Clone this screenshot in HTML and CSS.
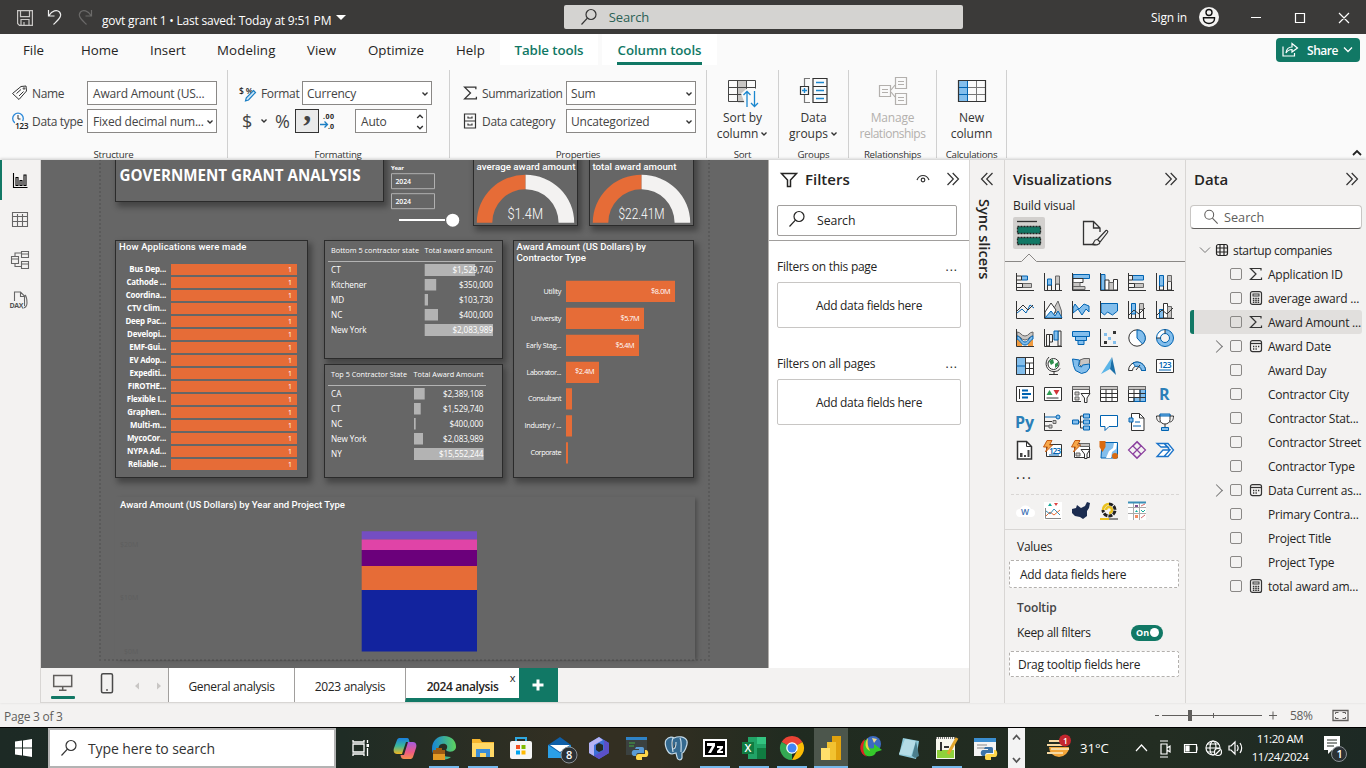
FILE: index.html
```html
<!DOCTYPE html>
<html lang="en">
<head>
<meta charset="utf-8">
<title>govt grant 1</title>
<link rel="stylesheet" href="styles.css">
</head>
<body>
<svg class="defs" width="0" height="0">
  <symbol id="sigma" viewBox="0 0 14 14"><path d="M12 3.500V1.500H1.500L7 7L1.500 12.500H12.500V10.500" fill="none" stroke="#333" stroke-width="1.200"/></symbol>
  <symbol id="calc" viewBox="0 0 14 14"><rect x="1.500" y=".6" width="11" height="12.800" rx="2" fill="none" stroke="#333" stroke-width="1.200"/><rect x="4" y="3" width="6" height="2" fill="none" stroke="#333"/><path d="M3.800 7.500h6.500M3.800 9.500h6.500M3.800 11.300h6.500" stroke="#333" stroke-width="1.300" stroke-dasharray="1.600 .8"/></symbol>
  <symbol id="cal" viewBox="0 0 14 14"><rect x="1.500" y="1.600" width="11" height="11" rx="2" fill="none" stroke="#333" stroke-width="1.200"/><path d="M1.500 4.500h11" stroke="#333" stroke-width="1.200"/><path d="M4 7.500h6.500M4 10h4.500" stroke="#333" stroke-width="1.300" stroke-dasharray="1.300 1.200"/></symbol>
  <symbol id="down" viewBox="0 0 8 8"><path d="M1.500 2.500L4 5L6.500 2.500" fill="none" stroke="#333" stroke-width="1.400"/></symbol>
  <symbol id="dbl" viewBox="0 0 14 14"><path d="M1.500 1L7.300 7L1.500 13M6.700 1L12.500 7L6.700 13" fill="none" stroke="#333" stroke-width="1.200"/></symbol>
  <symbol id="lens" viewBox="0 0 18 18"><circle cx="11" cy="6.500" r="5" fill="none" stroke="currentColor" stroke-width="1.200"/><path d="M7.400 10.200L1.500 16.500" stroke="currentColor" stroke-width="1.200"/></symbol>
</svg>

<header class="titlebar">
  <svg class="tb-icons" width="96" height="34" fill="none" stroke="#c8c6c4" stroke-width="1.200"><path d="M17.600 10.600h14.800v14.800H19.500l-1.900-1.900zM20.500 10.600v6h9v-6M21 25v-5.500h8V25M24 25v-3"/><path d="M48.500 10v6h6M49 15.500c3-5 8-6 10.500-3.500c3.500 4-1.500 8-6 12.500" stroke="#eee"/><path d="M91.500 10v6h-6M91 15.500c-3-5-8-6-10.500-3.500c-3.500 4 1.500 8 6 12.500" stroke="#6b6a69"/></svg>
  <span class="doc">govt grant 1&nbsp;•&nbsp;Last saved: Today at 9:51 PM</span><i class="tri"></i>
  <div class="topsearch"><svg width="18" height="18"><use href="#lens"/></svg><span>Search</span></div>
  <span class="signin">Sign in</span>
  <svg class="winbtns" width="168" height="34" fill="none" stroke="#fff" stroke-width="1.200"><circle cx="11" cy="17" r="10" fill="#f3f2f1" stroke="none"/><circle cx="11" cy="12.500" r="3" stroke="#111" stroke-width="1.400"/><path d="M5.500 17.800h11v1.200a5.500 4.500 0 0 1-11 0z" stroke="#111" stroke-width="1.400"/><path d="M53 17.500h10M97.500 13.500h9v9h-9zM141 13l10 10M151 13l-10 10"/></svg>
</header>

<nav class="tabs">
  <span class="t-file">File</span><span class="t-home">Home</span><span class="t-ins">Insert</span><span class="t-mod">Modeling</span><span class="t-view">View</span><span class="t-opt">Optimize</span><span class="t-help">Help</span>
  <b class="ctx table">Table tools</b><b class="ctx column"><u>Column tools</u></b>
  <div class="share"><svg width="17" height="16" fill="none" stroke="#fff" stroke-width="1.200"><path d="M1 4.500v9.500h11.500v-3M4 11c.5-4.500 3-6 6-6V1.500L15.500 6L10 10V7.500C7.500 7.500 5.500 8.500 4 11z"/></svg><span>Share</span><svg width="10" height="8" fill="none" stroke="#fff" stroke-width="1.300"><path d="M1 1.500l4 4l4-4"/></svg></div>
</nav>

<section class="ribbon">
  <div class="grp g1">
    <div class="row"><svg width="18" height="18" fill="none" stroke="#333" stroke-width="1"><path d="M.5 9.500L9 2.500l5-.5l.5 5L7 15.500zM4.500 9.500l4.500-4M7 12l4.500-4.500"/><circle cx="12" cy="4.500" r=".8"/></svg><span>Name</span><div class="box">Award Amount (US...</div></div>
    <div class="row"><svg width="18" height="18" fill="none"><circle cx="6" cy="6.500" r="5.300" stroke="#2b88d8" stroke-width="1.300"/><path d="M6 3V7H8.500" stroke="#333"/><path d="M3 9h14v8H3z" fill="#fafafa"/><text x="3" y="16.500" class="i9" fill="#222" textLength="13.500">123</text></svg><span>Data type</span><div class="box">Fixed decimal num...<svg width="8" height="8"><use href="#down"/></svg></div></div>
    <p>Structure</p>
  </div>
  <div class="grp g2">
    <div class="row"><svg width="18" height="18"><text x="0" y="9.500" class="i9" fill="#222" textLength="14">$%</text><path d="M14.500 6.500l2 2l-7 7.500l-3 .800l.8-3z" fill="#cfe6f7" stroke="#1b7fc4" stroke-width="1.200"/></svg><span>Format</span><div class="box">Currency<svg width="8" height="8"><use href="#down"/></svg></div></div>
    <div class="row fmt"><span class="dollar">$</span><svg width="8" height="8"><use href="#down"/></svg><span class="pct">%</span><span class="comma">,</span><svg class="dec" width="17" height="20"><text x="3" y="8" class="i8" fill="#222" textLength="11">.00</text><text x="8" y="18" class="i8" fill="#222">.0</text><path d="M0 13.500h7M4.500 10.500l3 3l-3 3" fill="none" stroke="#1b7fc4" stroke-width="1.300"/></svg><div class="box auto">Auto<svg width="8" height="18" fill="none" stroke="#333" stroke-width="1.400"><path d="M1.200 5L4 2.200L6.800 5M1.200 13L4 15.800L6.800 13"/></svg></div></div>
    <p>Formatting</p>
  </div>
  <div class="grp g3">
    <div class="row"><svg width="15" height="16"><use href="#sigma"/></svg><span>Summarization</span><div class="box">Sum<svg width="8" height="8"><use href="#down"/></svg></div></div>
    <div class="row"><svg width="15" height="16" fill="none" stroke="#333" stroke-width="1.200"><path d="M1.500 1h11v14h-11zM1.500 8h11M5 3.500v1.500h4V3.500M5 10.500V12h4v-1.500"/></svg><span>Data category</span><div class="box">Uncategorized<svg width="8" height="8"><use href="#down"/></svg></div></div>
    <p>Properties</p>
  </div>
  <div class="grp big g4"><svg width="32" height="32" fill="none"><path d="M11 5.500h9v22h-9z" fill="#c8c6c4"/><path d="M1.500 5.500h27v21h-27zM1.500 12.500h27M1.500 19.500h27M10.500 5.500v21M19.500 5.500v21" stroke="#444"/><path d="M14 18.500l6-5h11v18H19z" fill="#fafafa"/><path d="M20 32V16.500M16.500 20l3.500-3.500l3.500 3.500M27.500 16v15.500M24 28l3.500 3.500L31 28" stroke="#1b87cf" stroke-width="1.300"/></svg><span>Sort by<br>column<svg width="8" height="8"><use href="#down"/></svg></span><p>Sort</p></div>
  <div class="grp big g5"><svg width="32" height="32" fill="none" stroke="#333" stroke-width="1.200"><path d="M15 3.500h14v24H15zM15 11.500h14M15 19.500h14"/><path d="M12 3.500H6.500V11M12 27.500H6.500V20" stroke="#777"/><path d="M2.500 11.500h8v8h-8z"/><path d="M18 7.500h8M18 15.500h8M18 23.500h8M6.500 13v5M4 15.500h5" stroke="#1b87cf" stroke-width="1.400"/></svg><span>Data<br>groups<svg width="8" height="8"><use href="#down"/></svg></span><p>Groups</p></div>
  <div class="grp big g6"><svg width="32" height="32" fill="none" stroke="#b3b0ad" stroke-width="1.200"><path d="M2.500 10.500h11v11h-11zM18.500 2.500h11v11h-11zM18.500 18.500h11v11h-11zM14 15l4-5M14 17l4 5M5 14.500h6M5 17.500h6M21 6.500h6M21 9.500h6M21 22.500h6M21 25.500h6"/></svg><span>Manage<br>relationships</span><p>Relationships</p></div>
  <div class="grp big g7"><svg width="32" height="32" fill="none"><path d="M2.500 5.500h9v21h-9z" fill="#83beec"/><path d="M2.500 12.500h27M2.500 19.500h27M20.500 5.500v21" stroke="#777"/><path d="M2 12.500h9.500M2 19.500h9.500M11.500 5.500v21" stroke="#0063b1"/><path d="M2.500 5.500h27v21h-27z" stroke="#333" stroke-width="1.200"/></svg><span>New<br>column</span><p>Calculations</p></div>
  <svg class="collapse" width="10" height="8" fill="none" stroke="#222" stroke-width="1.800"><path d="M1 6l4-4l4 4"/></svg>
</section>

<main class="work">
  <aside class="rail">
    <i></i>
    <svg width="41" height="160" fill="none" stroke="#666" stroke-width="1.100"><path d="M14.500 13v14.500h14M17 25.500v-8h2v8zM21 25.500v-5h2v5zM25 25.500V15h2v10.500z" stroke="#000"/><path d="M13.500 52.500h15v14h-15zM13.500 56.500h15M13.500 61.500h15M18.500 54v12M23.500 54v12"/><path d="M12.500 96.500h7v7h-7zM22.500 91.500h7v6h-7zM22.500 101.500h7v7h-7zM16 96v-3h6M16 104v2.500h6M12.500 99h7M22.500 94h7M22.500 104h7"/><path d="M15.500 141v-9h6l4 4v10M21.500 132v4.500h4M26 135c2 2 2 5 2 8s-2 5-5 5"/><path d="M10 141h15v7H10z" fill="#f3f2f1" stroke="none"/><text x="10.500" y="147.500" class="i8" fill="#555" stroke="none" textLength="14">DAX</text></svg>
  </aside>

  <section class="center">
    <div class="upper">
      <div class="canvas">
        <div class="page"></div>
        <svg class="v v-title" viewBox="115 150 269 52"><text x="119.500" y="180.500" class="hd" textLength="241" lengthAdjust="spacingAndGlyphs">GOVERNMENT GRANT ANALYSIS</text></svg>
        <svg class="v-year" viewBox="385 160 80 72"><text x="391" y="169.500" class="s6" font-weight="700" textLength="13">Year</text><path d="M391.500 173.700h43v15h-43zM391.500 193.700h43v15h-43z" fill="none" stroke="#b0b0b0"/><text x="395.500" y="184" class="s" font-weight="600" textLength="15.500">2024</text><text x="395.500" y="204" class="s" font-weight="600" textLength="15.500">2024</text><path d="M399 220h46" stroke="#fff" stroke-width="2"/><circle cx="452.700" cy="220.200" r="6.500" fill="#fff"/></svg>
        <svg class="v v-g1" viewBox="473 150 105 76"><text x="476.500" y="170" class="din" textLength="99" lengthAdjust="spacingAndGlyphs">average award amount</text><path d="M476.800 222.700A48.700 48 0 0 1 525.600 174.700V189.300A33 33.400 0 0 0 492.300 222.700z" fill="#e66c37"/><path d="M525.600 174.700A48.700 48 0 0 1 574.200 222.700H558.600A33 33.400 0 0 0 525.600 189.300z" fill="#f3f2f1"/><text x="507.500" y="219" class="num" textLength="35.500" lengthAdjust="spacingAndGlyphs">$1.4M</text></svg>
        <svg class="v v-g2" viewBox="589 150 105 76"><text x="592.500" y="170" class="din" textLength="84" lengthAdjust="spacingAndGlyphs">total award amount</text><path d="M592.800 222.700A48.700 48 0 0 1 641.600 174.700V189.300A33 33.400 0 0 0 608.300 222.700z" fill="#e66c37"/><path d="M641.600 174.700A48.700 48 0 0 1 690.200 222.700H674.600A33 33.400 0 0 0 641.600 189.300z" fill="#f3f2f1"/><text x="618.500" y="218.500" class="num" textLength="46" lengthAdjust="spacingAndGlyphs">$22.41M</text></svg>
        <div class="v v-app">
          <h3>How Applications were made</h3>
          <ul>
            <li><b>Bus Dep...</b><i>1</i></li><li><b>Cathode ...</b><i>1</i></li><li><b>Coordina...</b><i>1</i></li><li><b>CTV Clim...</b><i>1</i></li><li><b>Deep Pac...</b><i>1</i></li><li><b>Developi...</b><i>1</i></li><li><b>EMF-Gui...</b><i>1</i></li><li><b>EV Adop...</b><i>1</i></li><li><b>Expediti...</b><i>1</i></li><li><b>FIROTHE...</b><i>1</i></li><li><b>Flexible I...</b><i>1</i></li><li><b>Graphen...</b><i>1</i></li><li><b>Multi-m...</b><i>1</i></li><li><b>MycoCor...</b><i>1</i></li><li><b>NYPA Ad...</b><i>1</i></li><li><b>Reliable ...</b><i>1</i></li>
          </ul>
        </div>
        <svg class="v v-b5" viewBox="324 240 179 119"><g class="tab"><text x="331" y="253.300" class="s8" textLength="88" lengthAdjust="spacingAndGlyphs">Bottom 5 contractor state</text><text x="424.500" y="253.300" class="s8" textLength="68" lengthAdjust="spacingAndGlyphs">Total award amount</text><path d="M328 261.500h168" stroke="#b3b3b3"/><path d="M424.700 264h50.500v12h-50.500zM424.700 279h11.500v11.500h-11.500zM424.700 294h3.300v11.500h-3.300zM424.700 309h13.300v11.500h-13.300zM424.700 324h68.300v12h-68.300z" fill="#b3b3b3"/>
          <text x="331" y="273.300">CT</text><text x="331" y="288.300" textLength="35.500">Kitchener</text><text x="331" y="303.300">MD</text><text x="331" y="318.300">NC</text><text x="331" y="333.300" textLength="35.500">New York</text>
          <g text-anchor="end"><text x="493" y="273.300" textLength="40.500">$1,529,740</text><text x="493" y="288.300" textLength="34">$350,000</text><text x="493" y="303.300" textLength="34">$103,730</text><text x="493" y="318.300" textLength="34">$400,000</text><text x="493" y="333.300" textLength="40.500">$2,083,989</text></g></g></svg>
        <svg class="v v-t5" viewBox="324 364 179 114"><g class="tab"><text x="331" y="377.300" class="s8" textLength="76" lengthAdjust="spacingAndGlyphs">Top 5 Contractor State</text><text x="413.500" y="377.300" class="s8" textLength="70" lengthAdjust="spacingAndGlyphs">Total Award Amount</text><path d="M328 385.500h158" stroke="#b3b3b3"/><path d="M414 388h10.700v11.500H414zM414 403h6.700v11.500H414zM414 418h1.700v11.500H414zM414 433h9v11.500h-9zM414 448h69.700v12H414z" fill="#b3b3b3"/>
          <text x="331" y="397.300">CA</text><text x="331" y="412.300">CT</text><text x="331" y="427.300">NC</text><text x="331" y="442.300" textLength="35.500">New York</text><text x="331" y="457.300">NY</text>
          <g text-anchor="end"><text x="483.500" y="397.300" textLength="40.500">$2,389,108</text><text x="483.500" y="412.300" textLength="40.500">$1,529,740</text><text x="483.500" y="427.300" textLength="34">$400,000</text><text x="483.500" y="442.300" textLength="40.500">$2,083,989</text><text x="483.500" y="457.300" textLength="44.500">$15,552,244</text></g></g></svg>
        <svg class="v v-type" viewBox="513 240 181 238"><text x="516.500" y="250" class="din" textLength="129.500" lengthAdjust="spacingAndGlyphs">Award Amount (US Dollars) by</text><text x="516.500" y="261" class="din" textLength="69.500" lengthAdjust="spacingAndGlyphs">Contractor Type</text>
          <path d="M566 280.700h109v21.300H566zM566 307.700h78v21.300h-78zM566 334.700h73v21.300h-73zM566 361.700h33v21.300h-33zM566 388.300h6v21.300h-6zM566 415.200h6v21.300h-6zM566 442.200h2v21.300h-2z" fill="#e66c37"/>
          <g class="cat" text-anchor="end"><text x="561.500" y="294" textLength="18">Utility</text><text x="561.500" y="321" textLength="30.500">University</text><text x="561.500" y="348" textLength="35.500">Early Stag...</text><text x="561.500" y="375" textLength="35">Laborator...</text><text x="561.500" y="401" textLength="33.500">Consultant</text><text x="561.500" y="428" textLength="37">Industry / ...</text><text x="561.500" y="455" textLength="31">Corporate</text><text x="670.500" y="294" textLength="19.500">$8.0M</text><text x="639.500" y="321" textLength="19">$5.7M</text><text x="634.500" y="348" textLength="19">$5.4M</text><text x="594.500" y="374" textLength="19.500">$2.4M</text></g></svg>
        <svg class="v-year2" viewBox="115 497 580 163"><text x="120" y="508.300" class="din" textLength="225" lengthAdjust="spacingAndGlyphs">Award Amount (US Dollars) by Year and Project Type</text><g class="faint"><text x="120" y="547">$20M</text><text x="120" y="600">$10M</text><text x="124" y="654">$0M</text></g><path d="M361.700 531.300H477v8.200H361.700z" fill="#744ec2"/><path d="M361.700 539.500H477v10.500H361.700z" fill="#e044a7"/><path d="M361.700 550H477v16H361.700z" fill="#6b007b"/><path d="M361.700 566H477v24H361.700z" fill="#e66c37"/><path d="M361.700 590H477v61.500H361.700z" fill="#12239e"/></svg>
      </div>

      <aside class="filters">
        <div class="fhead"><svg width="18" height="18" fill="none" stroke="#252423" stroke-width="1.500"><path d="M1.500 1.500h15L10.500 8v6.500h-3V8z"/></svg><h2>Filters</h2><svg class="eye" width="14" height="10" fill="none" stroke="#333" stroke-width="1.200"><path d="M1 6c2.500-6 9.500-6 12 0"/><circle cx="7" cy="6" r="1.800"/></svg><svg width="14" height="14"><use href="#dbl"/></svg></div>
        <div class="fsearch"><svg width="18" height="18"><use href="#lens"/></svg><span>Search</span></div>
        <div class="fsec"><div><span>Filters on this page</span><em>...</em></div><p>Add data fields here</p></div>
        <div class="fsec"><div><span>Filters on all pages</span><em>...</em></div><p>Add data fields here</p></div>
      </aside>
    </div>
    <div class="pages">
      <div class="device"><svg width="128" height="35" fill="none" stroke="#605e5c" stroke-width="1.500"><path d="M12.700 7.500h18v11h-18zM21.700 19v3M18 22.200h7.500"/><rect x="60.500" y="5.700" width="11" height="19" rx="1.500" stroke="#4a4a4a"/><path d="M65 22h2"/><path d="M98 14.500v7l-4-3.500zM116 14.500v7l4-3.500z" fill="#c8c6c4" stroke="none"/><rect x="10" y="28" width="24" height="3" rx="1" fill="#117865" stroke="none"/></svg></div>
      <span class="pt p1">General analysis</span><span class="pt p2">2023 analysis</span><span class="pt p3 on">2024 analysis<small>x</small></span>
      <div class="add"><svg width="12" height="12"><path d="M6 .5v11M.5 6h11" stroke="#fff" stroke-width="3"/></svg></div>
    </div>
  </section>

  <aside class="sync"><svg width="14" height="14" class="flip"><use href="#dbl"/></svg><span>Sync slicers</span></aside>

  <aside class="viz">
    <div class="vhead"><h2>Visualizations</h2><svg width="14" height="14"><use href="#dbl"/></svg></div>
    <div class="bv">Build visual</div>
    <svg class="vtabs" width="180" height="49" fill="none"><rect x="8" y="1" width="32" height="32" rx="2" fill="#d2d0ce"/><path d="M12 5.500h20" stroke="#333" stroke-width="1.300"/><path d="M12.500 10.500h23v7h-23zM12.500 21.500h23v7h-23z" fill="#117865" stroke="#222" stroke-width="1.300" stroke-dasharray="2 1"/><path d="M90.500 28.500H78.500v-23h10l6.500 6.500v4M88.500 5.500v6.500h6" stroke="#333" stroke-width="1.300"/><path d="M100.500 15l-8 8.500l2.500 2.500l7.500-9.500c1-1.500-1-3-2-1.500zM92 23.500c-4 0-2 3.500-5 5c4 1 8 0 8-2.500" stroke="#333" stroke-width="1.200"/><path d="M0 45.500h16.500l7.500-7.500l7.500 7.500H180" stroke="#8a8886"/></svg>
    <div class="icons">
      <svg><path class="k" d="M.5 0v17.500H18"/><path class="g" d="M6.500 10.500h9v4h-9z"/><path class="b" d="M5.500 3h6v4h-6z"/><path class="k" d="M1 3h4.500v4H1M1 10.500h5.500v4H1"/></svg>
      <svg><path class="k" d="M.5 0v17.500H18M3.500 17v-5h4v5M11.500 17v-6h4v6"/><path class="b" d="M3.500 6h4v6h-4z"/><path class="g" d="M11.500 3h4v8h-4z"/></svg>
      <svg><path class="b" d="M1 1.500h16.500v4H1z"/><path class="w" d="M1 5.500h10v4H1z"/><path class="g" d="M1 9.500h7v4H1zM1 13.500h12v3H1z"/><path class="k" d="M.5 0v17.500H18"/></svg>
      <svg><path class="b" d="M1 1.500h4V17H1z"/><path class="w" d="M5 7h4v10H5zM13.500 6.500h4V17h-4z"/><path class="g" d="M9 9.500h4.500V17H9z"/><path class="k" d="M.5 0v17.500H18"/></svg>
      <svg><path class="b" d="M4.500 2.500h11v4.500h-11z"/><path class="g" d="M6.500 10.500h9v4h-9z"/><path class="k" d="M.5 0v17.500H18M1 2.500h3.500V7H1M1 10.500h5.500v4H1"/></svg>
      <svg><path class="b" d="M3.500 2.500h4V13h-4z"/><path class="g" d="M11.500 2.500h4v6h-4z"/><path class="k" d="M.5 0v17.500H18M3.500 13v4h4v-4M11.500 8.500V17h4V8.500"/></svg>

      <svg><path class="l" d="M1 12l5-4l4 4l4-8l4 3"/><path class="k" d="M.5 0v17.500H18M1 10l6-6l5 5l5-5"/></svg>
      <svg><path class="g" d="M9 9l5-9l3.500 10v7z"/><path class="w" d="M1 11l6-9l5 7l-4 8H1z"/><path class="b" d="M1 17l6-7l4 5l3-5l4 7z"/><path class="k" d="M.5 0v17.500H18"/></svg>
      <svg><path class="b" d="M1 7l2-4l4 5l5-5l5 2v6l-3-3l-4 6l-4-6l-5 4z"/><path class="k" d="M.5 0v17.500H18"/></svg>
      <svg><path class="b" d="M1 2.500h16.500V10l-5 4l-5-3l-3 3l-3.500-3z"/><path class="k" d="M.5 0v17.500H18"/></svg>
      <svg><path class="b" d="M3.500 2.500h4V13h-4z"/><path class="g" d="M11.500 2.500h4v6h-4z"/><path class="k" d="M.5 0v17.500H18M3.500 13v4M7.500 13v4M11.500 8v9M15.500 8v9M1 14l5-5l5 4l6-6"/></svg>
      <svg><path class="b" d="M3.500 8.500h4V17h-4z"/><path class="w" d="M7.500 2.500h4V17h-4z"/><path class="g" d="M11.500 5.500h4V17h-4z"/><path class="k" d="M.5 0v17.500H18M1 14l5-5l5 4l6-6"/></svg>

      <svg><path class="g" d="M1 3c4 0 4 4 8 4s4-4 8-4v4c-4 0-4 4-8 4s-4-4-8-4z"/><path d="M1 11h5v6H1zM12 11h5v6h-5z" fill="#f09a3e"/><path class="b" d="M1 7c4 0 4 6 8 6s4-6 8-6v3c-4 2-4 6-8 6s-4-4-8-6z"/><path class="k" d="M.5 0v17.500H18"/></svg>
      <svg><path class="k" d="M.5 0v17.500H18M2.500 5.500h3V17h-3zM5.500 5.500h3V13h-3zM14 2h3v15h-3z"/><path class="b" d="M10 2h4v9h-4z"/></svg>
      <svg><path class="b" d="M.5 2.500h17v5H.500zM3.500 7.500h11v4h-11zM6 11.500h6v4H6z"/></svg>
      <svg><path class="k" d="M.5 0v17.500H18"/><path d="M4 4h3v3H4zM8 8h3v3H8zM13 12h3v3h-3z" fill="#83beec"/><path d="M13 2h3v3h-3zM4 12h3v3H4z" fill="#333"/></svg>
      <svg><circle class="w" cx="9" cy="9" r="8.200"/><path class="b" d="M9 1a8 8 0 0 1 5.500 14L9 9z"/></svg>
      <svg><circle cx="9" cy="9" r="6.500" fill="none" stroke="#83beec" stroke-width="4"/><path d="M2.500 9A6.500 6.500 0 0 1 9 2.500" fill="none" stroke="#fff" stroke-width="4"/><circle class="l" cx="9" cy="9" r="8.500"/><circle class="l" cx="9" cy="9" r="4.500"/><path class="k" d="M9 .5v4M.5 9h4"/></svg>

      <svg><path class="b" d="M.5.5h9v17h-9z"/><path class="w" d="M9.500.5h8v17h-8z"/><path class="k" d="M9.500 6h8M9.500 11.500h8M13.500 6v11M.5.5h17v17H.500z"/><path class="l" d="M.5 9h9"/></svg>
      <svg><circle cx="9.500" cy="7" r="5.500" fill="#fff" stroke="#333"/><path d="M5 4l4-2l1 4l-3 2zM11 7l3-2v4l-3 2z" fill="#2f8f4e"/><path class="k" d="M5 0c-6 6-2 15 5 14.500c3 0 5-1 6-3M10 14.500v3M5 17.500h9"/></svg>
      <svg><path class="g" d="M8 3l4-1.500h5.500v5l-2 3l-5 1l-3-3z"/><path class="b" d="M.5 2l7 1l-1 6l3 1l1-2l7-1v4l-3 4l-5 1.500l-6-3l-2-5z"/></svg>
      <svg><path d="M12 0L1 17l9-5z" fill="#5bb5e8"/><path d="M12 0l4 18l-6-6z" fill="#1a6fa8"/></svg>
      <svg><path class="w" d="M.5 13.500a8.500 8.500 0 0 1 17 0h-4a4.500 4.500 0 0 0-9 0z"/><path class="b" d="M5 6a8.500 8.500 0 0 1 12.500 7.500h-4a4.500 4.500 0 0 0-6-4z"/><path class="k" d="M8 13l4-5"/></svg>
      <svg><path class="w" d="M.5 2.500h17v13H.500z"/><text x="2.500" y="11" class="i9" fill="#0063b1" textLength="13">123</text><path class="l" d="M3 13h12"/></svg>

      <svg><path class="w" d="M.5 1.500h17v15H.500z"/><path class="k" d="M3.500 4v10"/><path class="l" d="M6 5.500h6M6 9h9M6 12.500h6" stroke-width="1.800"/></svg>
      <svg><path class="w" d="M.5 2.500h17v13H.500z"/><path d="M2.500 10l3-5l3 5z" fill="#2f9e53"/><path d="M9.500 5h6l-3 5z" fill="#d13438"/><path class="k" d="M2.500 13h12"/></svg>
      <svg><path class="w" d="M.5 1.500h17v15H.500z"/><path class="g" d="M.5 1.500h17v3H.500zM3 7h4v3H3zM3 12h4v3H3z"/><path d="M9 9h9v9H9z" fill="#f3f2f1"/><path class="w" d="M9 8.500h9L15 13v4.500h-2.500V13z"/></svg>
      <svg><path class="w" d="M.5 1.500h17v15H.500z"/><path class="g" d="M.5 1.500h17v3H.500z"/><path class="k" d="M.5 8.500h17M.5 12.500h17M6 4.500v12M12 4.500v12"/></svg>
      <svg><path class="w" d="M.5 1.500h17v15H.500z"/><path class="b" d="M12 4.500h5.500v12H6v-4h6z"/><path class="g" d="M.5 1.500h17v3H.500z"/><path class="k" d="M.5 8.500h17M.5 12.500h17M6 4.500v12M12 4.500v12"/></svg>
      <svg><text x="3" y="15" class="ry">R</text></svg>

      <svg><text x="-1" y="15" class="ry" textLength="19">Py</text></svg>
      <svg><path class="k" d="M.5 0v17.500H18M1 8.500h7M1 13h4"/><path class="l" d="M1 4h11"/><circle class="b" cx="14" cy="4" r="2"/><path class="g" d="M9 7.500h3v3H9zM5 12h3v3H5z"/></svg>
      <svg><path class="k" d="M6 9h6M8.500 3v12M8.500 3H12M8.500 15H12"/><path class="b" d="M.5 7h6v4h-6zM11.500 1h6v4h-6zM11.500 7h6v4h-6zM11.500 13h6v4h-6z"/></svg>
      <svg><path class="w note" d="M.5 2.500h17v11H9l-4 4v-4H.500z"/></svg>
      <svg><path class="w" d="M3.500.5h8l4.500 4.500v12.500H3.500z"/><path class="k" d="M11.500.5V5H16"/><path class="b" d="M1 5h4v4H1z"/><path class="l" d="M7 9h5M5 13h8"/></svg>
      <svg><path class="w" d="M4 1.500h10v5c0 6-10 6-10 0z"/><path class="k" d="M4 3H.500c0 4 1.500 6 4 6M14 3h3.500c0 4-1.500 6-4 6"/><path class="b" d="M4 1h10v2H4zM5.500 14.500h7v3h-7z"/><path class="k" d="M9 11v3"/></svg>

      <svg><path class="w" d="M1.500.5h9l5 5v12.500H1.500z" stroke-width="1.500"/><path class="k" d="M10.500.5v5h5"/><path d="M4 12h2.500v4H4zM8 14h2v2H8zM11.500 9h2v7h-2z" fill="#444"/></svg>
      <svg><path class="w" d="M2.500 3.500h15v12h-15z"/><text x="5" y="12.500" class="i9" fill="#0063b1" textLength="12">123</text><path class="l" d="M5 14h10"/><path d="M3-.5h5L5.500 4h3l-7 7l2-5H-.5z" fill="#f7a84a" stroke="#c55a11"/></svg>
      <svg><path class="w" d="M2.500 2.500h15v14h-15z"/><path class="g" d="M8 2.500h9.500v3H8zM4 12h4v3H4z"/><path class="w" d="M9 8.500h9L15 13v4.500h-2.500V13z"/><path d="M3-.5h5L5.500 4h3l-7 7l2-5H-.5z" fill="#f7a84a" stroke="#c55a11"/></svg>
      <svg><path class="b" d="M2 1.500h15.500V17H1z"/><path d="M6 17l3-7l4-3l1-5h3l-1 6l-4 3l-1 6z" fill="#fff"/><path d="M-.5 0h6v6l-3 5l-3-5z" fill="#d8690f"/><circle cx="15" cy="15" r="3" fill="#d8690f"/></svg>
      <svg fill="none" stroke="#8b3f9e" stroke-width="1.200"><path d="M9 .5L17.500 9L9 17.500L.5 9zM9 1L5 5l4 4l4-4zM9 9l4 4l-4 4l-4-4zM5 5l4 4l-4 4M13 5L9 9l4 4"/></svg>
      <svg fill="#fff" stroke="#1a73c9" stroke-width="1.300"><path d="M1 2.500h7l4 3.500h-7zM1 15.500h7l6-6.500H7zM8 2.500h4l5.500 6.500l-5.500 6.500H8l6-6.500z"/></svg>
    </div>
    <div class="dots">...</div>
    <div class="custom">
      <svg><path d="M4 15a4 4 0 0 1 0-8a6 6 0 0 1 11 0a4 4 0 0 1 0 8z" fill="#fff"/><text x="5" y="13" class="i9" fill="#3d6fb4">W</text></svg>
      <svg><path d="M0 0h18v18H0z" fill="#fff"/><path d="M1.500 6v10.500H17" fill="none" stroke="#888"/><path d="M2 14l4-4l4 3l6-5" fill="none" stroke="#e66c37"/><path d="M2 9l4 3l4-5l6 6" fill="none" stroke="#3a8fb7"/><path d="M4 4l2-3l2 3z" fill="#1a9"/><path d="M10 1h4l-2 3z" fill="#d44"/></svg>
      <svg><path d="M0 7l4-1l1-3l4 3l4-2l2-4l3 1l-1 5l-2 3l0 5l-4 3l-3-2l-5-1l-3-3z" fill="#1b2c50"/></svg>
      <svg><path d="M9 2a6 6 0 1 1-6 6" fill="none" stroke="#222" stroke-width="3" stroke-dasharray="4 1"/><path d="M3 8a6 6 0 0 1 6-6M6 8a3 3 0 1 1 3 3" fill="none" stroke="#eac21f" stroke-width="2.500"/><path d="M0 17h9" stroke="#eac21f" stroke-width="2"/><path d="M9 17h9" stroke="#222"/></svg>
      <svg><path d="M0 0h18v18H0z" fill="#fff"/><path d="M0 5.500h18M0 11.500h18M5.500 0v18M11.500 0v18" stroke="#aaa"/><path d="M0 .5h18" stroke="#3a8fb7" stroke-width="2"/><path d="M7 3h3v2H7z" fill="#805090"/><path d="M13 4l4-2M13 16l4-3" stroke="#d46a6a"/><path d="M7 10l1.500-2L10 10z" fill="#1a9"/><path d="M13 8l2 2l2-2" fill="none" stroke="#1a9"/><path d="M7 13h3v3H7z" fill="#f58b60"/></svg>
    </div>
    <div class="wells"><h4>Values</h4><p>Add data fields here</p><h4 class="tt">Tooltip</h4><div class="keep"><span>Keep all filters</span><b>On<i></i></b></div><p class="drag">Drag tooltip fields here</p></div>
  </aside>

  <aside class="data">
    <div class="vhead"><h2>Data</h2><svg width="14" height="14"><use href="#dbl"/></svg></div>
    <div class="dsearch"><svg width="16" height="16" class="flip"><use href="#lens"/></svg><span>Search</span></div>
    <div class="tree">
      <div class="root"><svg width="12" height="8" fill="none" stroke="#777"><path d="M1 1.500l5 5l5-5"/></svg><svg width="14" height="14" fill="none" stroke="#252423" stroke-width="1.200"><rect x="1.500" y="1.500" width="11" height="11" rx="2"/><path d="M1.500 5h11M1.500 9h11M5 1.500v11M9 1.500v11"/></svg><span>startup companies</span></div>
      <div class="f"><em></em><i></i><svg><use href="#sigma"/></svg><span>Application ID</span></div>
      <div class="f"><em></em><i></i><svg><use href="#calc"/></svg><span>average award ...</span></div>
      <div class="f sel"><em></em><i></i><svg><use href="#sigma"/></svg><span>Award Amount ...</span></div>
      <div class="f"><em class="ar"></em><i></i><svg><use href="#cal"/></svg><span>Award Date</span></div>
      <div class="f"><em></em><i></i><svg></svg><span>Award Day</span></div>
      <div class="f"><em></em><i></i><svg></svg><span>Contractor City</span></div>
      <div class="f"><em></em><i></i><svg></svg><span>Contractor Stat...</span></div>
      <div class="f"><em></em><i></i><svg></svg><span>Contractor Street</span></div>
      <div class="f"><em></em><i></i><svg></svg><span>Contractor Type</span></div>
      <div class="f"><em class="ar"></em><i></i><svg><use href="#cal"/></svg><span>Data Current as...</span></div>
      <div class="f"><em></em><i></i><svg></svg><span>Primary Contra...</span></div>
      <div class="f"><em></em><i></i><svg></svg><span>Project Title</span></div>
      <div class="f"><em></em><i></i><svg></svg><span>Project Type</span></div>
      <div class="f"><em></em><i></i><svg><use href="#calc"/></svg><span>total award am...</span></div>
    </div>
  </aside>
</main>

<footer class="status"><span>Page 3 of 3</span><svg width="216" height="24" fill="none" stroke="#605e5c"><path d="M5 12.500h4M12 12.500h100M119 12.500h8M123 8.500v8M63.500 10v5"/><path d="M40 7v11" stroke-width="4"/><text x="140" y="17" class="zm" textLength="23">58%</text><path d="M183 7.500h15v10h-15z" stroke-width="1.300"/><path d="M185.500 11v-1.500h3M192.500 9.500h3V11M195.500 14v1.500h-3M188.500 15.500h-3V14"/></svg></footer>

<footer class="taskbar">
  <div class="start"><svg width="18" height="18" fill="#fff"><path d="M0 2.500l7-1v7H0zM8 1.400L17 0v8.500H8zM0 9.500h7v7l-7-1zM8 9.500h9V18l-9-1.400z"/></svg></div>
  <div class="tsearch"><svg width="18" height="18"><use href="#lens"/></svg><span>Type here to search</span></div>
  <div class="apps">
    <div class="a tv"><svg viewBox="0 0 24 24" fill="none" stroke="#fff" stroke-width="1.300"><path d="M4 8h11v8H4zM4 4v2h11V4M4 20v-2h11v2M18.500 4v3M18.500 12v8"/><path d="M17.500 8h2.500v3h-2.500z" fill="#fff" stroke="none"/></svg></div>
    <div class="a"><svg viewBox="0 0 24 24"><defs><linearGradient id="c1" x1="0" y1="0" x2="0" y2="1"><stop offset="0" stop-color="#1a7fe0"/><stop offset=".5" stop-color="#3bb89a"/><stop offset="1" stop-color="#f4b51e"/></linearGradient><linearGradient id="c2" x1="0" y1="0" x2="0" y2="1"><stop offset="0" stop-color="#a35be0"/><stop offset=".6" stop-color="#ee5a84"/><stop offset="1" stop-color="#f7904b"/></linearGradient></defs><path d="M7 2h7c2 0 2 2 2.500 4H13L9 18H4c-3 0-4-3-3-6l3-8c.7-1.500 1.500-2 3-2z" fill="url(#c1)"/><path d="M17 23h-6c-2 0-3-1-3.500-4H11l4-13h5c3 0 4 3 3 6l-3 9c-.7 1.500-1.500 2-3 2z" fill="url(#c2)"/></svg></div>
    <div class="a u"><svg viewBox="0 0 24 24"><defs><linearGradient id="ed"><stop offset="0" stop-color="#1684d8"/><stop offset="1" stop-color="#5ed35c"/></linearGradient></defs><path d="M0 13C0 4 6 0 12 0c8 0 12 5 12 11c0 5-8 6-10 3c3-4 0-7-4-6c-6 1-5 13 9 13c-8 6-19 1-19-8z" fill="url(#ed)"/><path d="M1 14h12v10H1z" fill="#e39a24"/><path d="M1 14h12v4H1zM4 12h6v2H4z" fill="#9b5b13"/></svg></div>
    <div class="a u"><svg viewBox="0 0 24 24"><path d="M1 3h8l2 3h12v15H1z" fill="#f5b52e"/><path d="M1 7h22v14H1z" fill="#ffd866"/><path d="M5 13h14v8h-4v-4H9v4H5z" fill="#3b8ed8"/></svg></div>
    <div class="a"><svg viewBox="0 0 24 24"><path d="M7 6V2h10v4" fill="none" stroke="#2fa8e0" stroke-width="2"/><rect x="1" y="5" width="22" height="18" rx="2" fill="#f5f5f5"/><path d="M7 9h4v4H7z" fill="#f25022"/><path d="M12.500 9h4v4h-4z" fill="#7fba00"/><path d="M7 14.500h4v4H7z" fill="#00a4ef"/><path d="M12.500 14.500h4v4h-4z" fill="#ffb900"/></svg></div>
    <div class="a"><svg viewBox="0 0 24 24"><path d="M0 9L12 1l11 8v13H0z" fill="#0f5fa8"/><path d="M2 9h20L12 16z" fill="#fff"/><path d="M0 9l12 8l11-8v13H0z" fill="#2b9fe6"/><circle cx="21" cy="19" r="8" fill="#2b3135" stroke="#8b9196"/><text x="18" y="23" class="i10" fill="#fff" font-weight="700">8</text></svg></div>
    <div class="a"><svg viewBox="0 0 24 24"><path d="M12 1l10 6v10l-10 6l-10-6V7z" fill="#3c6fd8"/><path d="M12 1L2 7v10l5 3V9l9-5z" fill="#b5b3f5"/><path d="M22 7v10l-10 6l-5-3l10-6V4z" fill="#5b50c8"/><path d="M9 9l3-2l4 2v5l-4 2l-3-2z" fill="#252b25"/></svg></div>
    <div class="a"><svg viewBox="0 0 24 24"><path d="M1 1h21v18H1z" fill="#3b4140"/><path d="M1 1h21v3H1z" fill="#2f83c7"/><path d="M4 7h6M4 10h5" stroke="#4a4"/><path d="M11 11h6c2 0 2 1 2 3v3h-6c-1 0-2 1-2 3H9c-3 0-3-6 0-6h5v-1h-4z" fill="#5b9bd5"/><path d="M20 14h1c3 0 3 7 0 7h-4v3h-4c-2 0-2-1-2-3c0-2 1-3 3-3h6z" fill="#ffd74a"/></svg></div>
    <div class="a"><svg viewBox="0 0 24 24" fill="#34698f" stroke="#c5dae8" stroke-width="1.200"><path d="M2 4c3-4 7-3 8-2c4-2 11-2 13 3c1 4-3 12-5 12v5c-1 3-5 2-5-1l-1-4l-4 1C3 18 0 8 2 4zM9 2c-2 4-1 8 0 14M16 2c2 4 1 10 1 14M9 13c2 0 3-2 3-7"/></svg></div>
    <div class="a u"><svg viewBox="0 0 24 24"><path d="M0 3h24v18H0z" fill="#fff"/><path d="M2 5h20v14H2z" fill="#000"/><path d="M4 7h8v3l-4 7H5l4-7H4zM14 10h6v2l-3 3h3v2h-6v-2l3-3h-3z" fill="#fff"/></svg></div>
    <div class="a u"><svg viewBox="0 0 24 24"><path d="M6 1h18v22H6z" fill="#21a366"/><path d="M15 1h9v7h-9z" fill="#33c481"/><path d="M15 12h9v11h-9z" fill="#107c41"/><path d="M0 6h12v12H0z" fill="#107c41"/><text x="2.500" y="16" class="i10" fill="#fff">X</text></svg></div>
    <div class="a u"><svg viewBox="0 0 24 24"><path d="M12 12L1.600 6A12 12 0 0 1 22.400 6z" fill="#ea4335"/><path d="M12 12V24A12 12 0 0 1 1.600 6z" fill="#34a853"/><path d="M12 12L22.400 6A12 12 0 0 1 12 24l5-9z" fill="#fbbc05"/><circle cx="12" cy="12" r="5.800" fill="#fff"/><circle cx="12" cy="12" r="4.500" fill="#4285f4"/></svg></div>
    <div class="a u act"><svg viewBox="0 0 24 24"><path d="M13 0h9v24h-9z" fill="#e0a10e"/><path d="M8 6h9v18H8z" fill="#f2c230"/><path d="M2 12h9v12H2z" fill="#ffdf6b"/></svg></div>
    <div class="a"><svg viewBox="0 0 24 24"><circle cx="15" cy="8" r="8" fill="#3c6ac0"/><path d="M9 3c-8 4-8 14 0 17c4 1 8 0 9-4l6-2l-8-6v4c-5 2-9-3-7-9z" fill="#35c92b"/><path d="M7 3c-7 5-6 15 2 18c-4-4-5-10-2-18z" fill="#d22"/><path d="M10 2c-4 5-3 11 2 13c-2-4-3-8-2-13z" fill="#f0d040"/><path d="M14 2l5 1l-3 4z" fill="#e8d890"/></svg></div>
    <div class="a"><svg viewBox="0 0 24 24"><path d="M7 2l16 3l-3 18l-17-4z" fill="#8cc8d8"/><path d="M9 3l11 2l-5 15l-12-2z" fill="#b5dce6"/><path d="M20 5l3 15l-4 2l-3-2z" fill="#4b7e8c"/></svg></div>
    <div class="a u"><svg viewBox="0 0 24 24"><path d="M1 1h19v22H1z" fill="#f7f7ee"/><path d="M2 14h17v8H2z" fill="#8fd13c"/><path d="M1 2h19" stroke="#777" stroke-dasharray="1 1" stroke-width="2"/><path d="M6 6v9M9 11h5" stroke="#333" stroke-width="2"/><path d="M22 2l-9 16" stroke="#e2a72e" stroke-width="3"/></svg></div>
    <div class="a"><svg viewBox="0 0 24 24"><path d="M0 2h22v18H0z" fill="#f4f4f4"/><path d="M0 2h22v4H0z" fill="#3b8ed0"/><path d="M3 9h10M3 12h8" stroke="#888"/><path d="M11 11h6c2 0 2 1 2 3v3h-6c-1 0-2 1-2 3H9c-3 0-3-6 0-6h5v-1h-4z" fill="#3b73a8"/><path d="M20 14h1c3 0 3 7 0 7h-4v3h-4c-2 0-2-1-2-3c0-2 1-3 3-3h6z" fill="#ffd74a"/></svg></div>
  </div>
  <div class="scr"><svg width="17" height="40" fill="none" stroke="#555" stroke-width="1.800"><path d="M5 11.500l3.500-4l3.500 4M5 30l3.500 4l3.500-4"/></svg></div>
  <svg class="weather" width="28" height="28" viewBox="0 0 28 28"><path d="M3 13h20a10 10 0 0 1-20 0z" fill="#f2a63b"/><path d="M3 7h12M1 11h18M5 15h18M1 19h16" stroke="#f7d9a1" stroke-width="2"/><circle cx="19" cy="6.500" r="6" fill="#c4262e"/><text x="17" y="10" class="i9" fill="#fff">1</text></svg>
  <span class="temp">31°C</span>
  <svg class="tray" width="110" height="30" fill="none" stroke="#fff" stroke-width="1.200"><path d="M1 18l5.500-6l5.500 6M26 11h6v10h-6zM32 15l3-2v6l-3-2M25 8h8M25 24h8M49.500 11.500h12v8h-12zM62 13.500v4"/><path d="M51 13h3v5h-3z" fill="#fff"/><circle cx="78" cy="15" r="7"/><ellipse cx="78" cy="15" rx="3" ry="7"/><path d="M71 15h14M72 11h12M72 19h7"/><circle cx="83" cy="19" r="3.500" fill="#222b20"/><path d="M81 21l4-4M94 13h2l4-4v12l-4-4h-2zM102 12c1.500 2 1.500 4 0 6M105 10c2 3 2 7 0 10"/></svg>
  <div class="clock">11:20 AM<br>11/24/2024</div>
  <svg class="notif" width="30" height="32"><path d="M1 4h16v14h-8l-4 4v-4H1z" fill="#fff"/><path d="M4 8h10M4 11h10M4 14h7" stroke="#222b24"/><circle cx="16" cy="22" r="7.500" fill="#2b3135" stroke="#8b9196"/><text x="13.500" y="26" class="i10" fill="#fff">1</text></svg>
</footer>
</body>
</html>
```
FILE: styles.css
```css
* { box-sizing: border-box; }
body { margin: 0; width: 1366px; height: 768px; overflow: hidden; display: flex; flex-direction: column; font-family: "Open Sans", "Noto Sans", sans-serif; font-size: 12px; color: #252423; background: #f3f2f1; }
h2, h3, h4, p, ul { margin: 0; padding: 0; font-weight: 400; }
i, em, u { font-style: normal; text-decoration: none; }
svg { flex: none; overflow: visible; }
span { white-space: nowrap; }
.defs { position: absolute; }
.flip { transform: scaleX(-1); }
.i8 { font-size: 7px; font-weight: 700; }
.i9 { font-size: 8.5px; font-weight: 600; }
.i10 { font-size: 11px; font-weight: 600; }

.titlebar { height: 34px; flex: none; background: #3b3a39; color: #fff; display: flex; align-items: center; }
.doc { margin-left: 6px; padding-top: 6px; font-size: 12px; letter-spacing: -.21px; width: 231px; }
.tri { margin-left: 3px; border: 5px solid transparent; border-top-color: #fff; border-bottom: 0; }
.topsearch { margin-left: 218px; width: 400px; height: 24px; border-radius: 2px; background: #d4d3d1; color: #333; display: flex; align-items: center; padding-left: 16px; gap: 11px; font-size: 13px; letter-spacing: -.1px; }
.topsearch span { color: #2b6155; }
.signin { margin-left: 188px; width: 47px; padding-top: 1px; font-size: 12px; letter-spacing: -.15px; }

.tabs { height: 31px; flex: none; background: #fafafa; display: flex; align-items: center; font-size: 13.300px; }
.tabs > span { flex: none; height: 31px; line-height: 33px; }
.t-file { padding-left: 23px; width: 81px; }
.t-home { width: 69px; }
.t-ins { width: 67px; }
.t-mod { width: 90px; letter-spacing: .1px; }
.t-view { width: 61px; }
.t-opt { width: 88px; }
.t-help { width: 44px; }
.ctx { height: 31px; background: #fff; color: #117865; text-align: center; line-height: 33px; font-weight: 600; letter-spacing: -.1px; }
.table { width: 98px; }
.column { width: 115px; margin-left: 4px; }
.ctx u { display: block; width: 85px; height: 31px; margin: 0 15px; border-bottom: 3px solid #117865; white-space: nowrap; }
.share { margin-left: 559px; width: 84px; height: 24px; background: #117865; color: #fff; border-radius: 4px; display: flex; align-items: center; gap: 4px; padding-left: 6px; font-size: 12px; font-weight: 600; }
.share span { width: 32px; letter-spacing: -.45px; padding-top: 2px; margin-left: 4px; }

.ribbon { height: 95px; flex: none; background: #fafafa; display: flex; padding-top: 5px; color: #444; }
.grp { height: 88px; border-right: 1px solid #d0d0d0; padding-top: 11px; display: flex; flex-direction: column; flex: none; }
.grp p { margin: auto 0 -2px; text-align: center; font-size: 9.700px; line-height: 11px; letter-spacing: -.25px; white-space: nowrap; color: #333; }
.g1 p, .g2 p { padding-right: 12px; }
.g3 p { padding-right: 13px; }
.row { display: grid; height: 24px; margin-bottom: 4px; align-items: center; }
.row > span { font-size: 12px; letter-spacing: -.33px; }
.box { height: 24px; border: 1px solid #8a8886; background: #fff; padding: 1px 5px 0 4px; display: flex; align-items: center; justify-content: space-between; white-space: nowrap; font-size: 12px; letter-spacing: -.2px; }
.g1 .box { padding-left: 5px; }
.box svg { margin-right: -3px; }
.g1 { width: 228px; padding-left: 12px; }
.g1 .row { grid-template-columns: 20px 55px 130px; }
.g2 { width: 222px; padding-left: 11px; }
.g2 .row { grid-template-columns: 22px 41px 130px; }
.g2 .fmt { display: flex; }
.dollar { width: 21px; padding-left: 3px; }
.row .dollar, .row .pct { font-size: 18px; }
.pct { margin-left: 7px; width: 20px; }
.comma { width: 24px; height: 24px; border: 1px solid #333; background: #eaeaea; text-align: center; font-family: "Liberation Serif", serif; font-weight: 700; line-height: 0; }
.row .comma { font-size: 32px; }
.dec { margin-left: 1px; }
.box.auto { width: 72px; margin-left: 18px; padding-left: 5px; }
.g3 { width: 257px; padding-left: 13px; }
.g3 .row { grid-template-columns: 19px 84px 130px; }
.big { align-items: center; padding-top: 5px; font-size: 12px; line-height: 16px; text-align: center; }
.big > span { margin-top: 3px; color: #333; letter-spacing: -.05px; }
.big span svg { margin-left: 2px; }
.g4 { width: 72px; } .g5 { width: 70px; } .g6 { width: 88px; } .g7 { width: 70px; }
.big.g6 > span { color: #b3b0ad; letter-spacing: -.5px; }
.g6 > span:first-line { letter-spacing: -.2px; }
.collapse { margin: 79px 0 0 345px; }

.work { height: 543px; flex: none; display: flex; box-shadow: 0 -1px 3px #0003; }
.rail { width: 41px; flex: none; border-right: 1px solid #d8d6d4; display: flex; }
.rail i { width: 3px; height: 40px; background: #117865; margin-right: -3px; }
.center { width: 928px; flex: none; }
.upper { display: flex; height: 508px; }
.canvas { position: relative; width: 727px; height: 508px; background: #666; overflow: hidden; }
.page { position: absolute; left: 58px; top: -20px; width: 611px; height: 521px; border: 2px dotted #5a5a5a; }
.canvas > svg, .v { position: absolute; display: block; overflow: hidden; }
.canvas > .v { outline: 1.500px solid #2b2b2b; outline-offset: -1px; box-shadow: 3px 4px 6px 1px #0005; background: #666; }
.v-title { left: 74px; top: -10px; width: 269px; height: 52px; }
.v-year { left: 344px; top: 0; width: 80px; height: 72px; }
.v-g1 { left: 432px; top: -10px; width: 105px; height: 76px; }
.v-g2 { left: 548px; top: -10px; width: 105px; height: 76px; }
.v-app { left: 74px; top: 80px; width: 193px; height: 238px; }
.v-b5 { left: 283px; top: 80px; width: 179px; height: 119px; }
.v-t5 { left: 283px; top: 204px; width: 179px; height: 114px; }
.v-type { left: 472px; top: 80px; width: 181px; height: 238px; }
.canvas > .v-year2 { left: 74px; top: 337px; width: 580px; height: 163px; box-shadow: 3px 1px 4px -1px #0004; }
.canvas text { fill: #fff; }
.hd { font-size: 15.500px; font-weight: 700; }
.din { font-family: Roboto, sans-serif; font-size: 9.500px; font-weight: 500; }
.num { font-family: Roboto, sans-serif; font-size: 15.500px; font-weight: 300; }
.s { font-size: 7px; }
.s6 { font-size: 6px; }
.tab { font-size: 8.200px; font-weight: 500; }
.s8 { font-size: 8px; }
.cat { font-size: 7.300px; font-weight: 500; }
.canvas .faint text { fill: #5e5e5e; font-size: 7px; }
.v-app h3 { font: 500 9.500px/12px Roboto, sans-serif; letter-spacing: .15px; color: #fff; padding: 1px 0 0 4px; height: 24px; }
.v-app ul { list-style: none; }
.v-app li { height: 13px; display: flex; color: #fff; line-height: 11px; }
.v-app b { width: 51px; text-align: right; font-size: 7.900px; font-weight: 700; letter-spacing: -.2px; white-space: nowrap; }
.v-app li i { margin-left: 5px; width: 126px; height: 11px; background: #e66c37; text-align: right; padding-right: 5px; font-size: 7px; }

.filters { width: 201px; background: #fff; border-left: 1px solid #b3b0ad; }
.fhead { height: 60px; display: flex; padding: 12px 0 0 11px; }
.fhead h2 { font-size: 15px; font-weight: 600; line-height: 15px; margin-left: 7px; width: 111px; }
.eye { margin: 2px 16px 0 0; width: 14px; }
.fsearch { margin: -15px 0 4px 8px; width: 180px; height: 31px; border: 1px solid #a19f9d; border-radius: 2px; display: flex; align-items: center; padding-left: 10px; gap: 11px; font-size: 12.300px; letter-spacing: -.1px; }
.fsearch svg { margin-top: -3px; }
.fsearch + .fsec { border-top: 1px solid #a19f9d; height: 98px; }
.fsec { height: 97px; padding: 17px 8px 0; }
.fsec div { display: flex; justify-content: space-between; line-height: 17px; height: 16px; padding-right: 3px; font-size: 12px; letter-spacing: -.27px; }
.fsec em { letter-spacing: 1px; }
.fsec p { height: 46px; margin-top: 8px; border: 1px solid #c8c6c4; border-radius: 2px; line-height: 46px; text-align: center; font-size: 12px; letter-spacing: -.3px; }
.pages { height: 35px; display: flex; border-bottom: 1px solid #d8d6d4; }
.device { width: 127px; }
.pt { background: #fff; border-left: 1px solid #a19f9d; text-align: center; line-height: 38px; font-size: 12px; letter-spacing: -.33px; position: relative; }
.p1 { width: 126px; } .p2 { width: 111px; } .p3 { width: 114px; }
.on { font-weight: 600; letter-spacing: -.4px; border-bottom: 4px solid #117865; }
.on small { position: absolute; right: 4px; top: 2px; font-size: 11px; line-height: 16px; font-weight: 400; }
.add { width: 39px; background: #117865; display: flex; align-items: center; justify-content: center; padding-right: 1px; }

.sync { width: 35px; border-left: 1px solid #d8d6d4; display: flex; flex-direction: column; align-items: center; padding-top: 12px; }
.sync span { writing-mode: vertical-rl; font-size: 14.600px; font-weight: 600; margin: 13px 4px 0 0; }
.viz { width: 181px; flex: none; border-left: 1px solid #d8d6d4; }
.vhead { display: flex; justify-content: space-between; padding: 12px 7px 0 8px; height: 37px; }
.vhead h2 { font-size: 15px; font-weight: 600; line-height: 14px; letter-spacing: -.05px; }
.bv { padding-left: 8px; font-size: 12px; line-height: 17px; height: 19px; font-weight: 500; letter-spacing: -.1px; }
.vtabs { display: block; }
.icons, .custom { display: grid; grid-template-columns: repeat(6, 18px); grid-auto-rows: 18px; gap: 10px; padding: 8px 0 0 11px; }
.icons svg, .custom svg { width: 18px; height: 18px; }
.k { fill: none; stroke: #333; }
.l { fill: none; stroke: #0063b1; }
.b { fill: #83beec; stroke: #0063b1; }
.g { fill: #c8c6c4; stroke: #666; }
.w { fill: #fff; stroke: #333; }
.note { stroke: #0063b1; }
.ry { font-size: 16px; font-weight: 700; fill: #2b7fb8; }
.dots { font-size: 14px; letter-spacing: 2px; height: 36px; line-height: 29px; border-bottom: 1px dashed #d8d6d4; margin: 0 6px; padding-left: 5px; }
.custom { padding-top: 7px; height: 35px; border-bottom: 1px solid #d8d6d4; }
.wells { padding: 8px 6px 0 4px; }
.wells h4 { font-size: 12px; line-height: 18px; padding-left: 8px; letter-spacing: -.25px; }
.wells p { height: 28px; line-height: 28px; border: 1px dashed #b3b0ad; border-radius: 2px; background: #fff; padding-left: 10px; margin-top: 4px; font-size: 12px; letter-spacing: -.3px; }
.wells .tt { margin-top: 11px; font-weight: 600; letter-spacing: -.1px; color: #444; }
.keep { display: flex; justify-content: space-between; padding: 0 16px 0 8px; align-items: center; height: 31px; }
.keep span { letter-spacing: -.33px; }
.keep b { width: 32px; height: 16px; border-radius: 8px; background: #117865; color: #fff; font-size: 9px; line-height: 16px; padding-left: 5px; display: flex; align-items: center; gap: 1px; }
.keep i { width: 9px; height: 9px; border-radius: 5px; background: #fff; }
.wells .drag { padding-left: 8px; height: 26px; line-height: 26px; margin-top: 3px; letter-spacing: -.25px; }

.data { width: 181px; border-left: 1px solid #d8d6d4; }
.dsearch { margin: 8px 0 0 4px; width: 172px; height: 24px; background: #fff; border: 1px solid #c8c6c4; border-bottom-color: #605e5c; border-radius: 4px; display: flex; align-items: center; padding-left: 12px; gap: 5px; font-size: 12.700px; color: #605e5c; }
.tree { padding-top: 9px; }
.root, .f { display: flex; height: 24px; align-items: center; }
.root { padding-left: 13px; gap: 4px; }
.root span { margin-left: 0; letter-spacing: -.33px; }
.f { margin: 0 4px; padding-left: 22px; }
.f em { width: 18px; height: 24px; flex: none; }
.f .ar { display: flex; align-items: center; }
.f .ar::before { content: ""; width: 8px; height: 8px; border: 1px solid #777; border-width: 1px 1px 0 0; transform: rotate(45deg); }
.f i { width: 12px; height: 12px; border: 1px solid #8a8886; border-radius: 2px; flex: none; }
.f svg { width: 14px; height: 14px; margin: 0 5px 0 7px; }
.f span { letter-spacing: -.22px; }
.sel { background: #e1dfdd; border-left: 4px solid #117865; border-radius: 3px; padding-left: 18px; }

.status { height: 24px; flex: none; display: flex; justify-content: space-between; align-items: center; color: #605e5c; }
.status span { padding: 3px 0 0 4px; letter-spacing: -.25px; }
.zm { font-size: 12px; fill: #605e5c; stroke: none; }

.taskbar { height: 41px; flex: none; display: flex; align-items: center; border-top: 1px solid #000; background: linear-gradient(90deg, #1d2a25, #1f2c25 25%, #332f22 42%, #332f22 48%, #202b20 58%, #232d22 85%, #1d2924); color: #fff; }
.start { width: 48px; padding: 3px 0 0 15px; flex: none; }
.tsearch { width: 288px; flex: none; height: 40px; background: #fff; border: 2px solid #b3b3b3; color: #333; display: flex; align-items: center; padding-left: 10px; gap: 10px; font-size: 14px; letter-spacing: -.1px; }
.apps { display: flex; height: 40px; width: 672px; flex: none; }
.a { width: 38.7px; flex: none; height: 40px; display: flex; align-items: center; justify-content: center; }
.tv { width: 50px; }
.a svg { width: 24px; height: 24px; }
.u { background: linear-gradient(#76b9ed, #76b9ed) 50% 100% / 30px 2px no-repeat; }
.act { background: linear-gradient(#76b9ed, #76b9ed) 50% 100% / 34px 2px no-repeat, linear-gradient(#4c564c, #4c564c) 50% 0 / 34px 40px no-repeat; }
.scr { width: 17px; flex: none; height: 40px; background: #f3f3f3; }
.weather { margin-left: 21px; }
.temp { margin-left: 6px; width: 55px; font-size: 13.200px; letter-spacing: -.1px; }
.tray { flex: none; }
.clock { margin-left: 3px; width: 64px; text-align: center; font-size: 11.500px; line-height: 18px; letter-spacing: -.45px; white-space: nowrap; }
.notif { margin-left: 11px; }
```
